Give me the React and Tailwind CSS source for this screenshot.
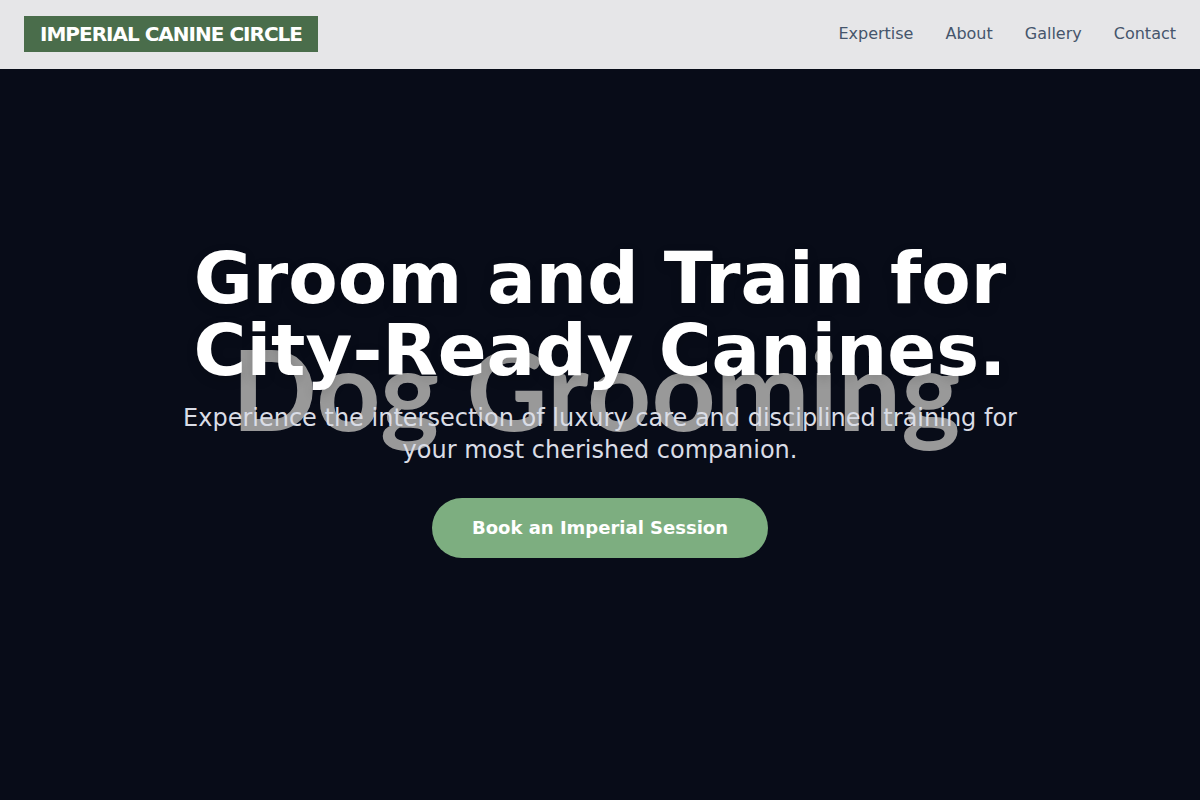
const navLinks = [
  { label: 'Expertise', href: '#expertise' },
  { label: 'About', href: '#about' },
  { label: 'Gallery', href: '#gallery' },
  { label: 'Contact', href: '#contact' },
];

function Navbar() {
  return (
    <header className="fixed inset-x-0 top-0 z-20 border-b border-[#e6e6e8] bg-[#e6e6e8]">
      <div className="flex items-center justify-between px-6 py-4">
        <a href="#home" className="bg-[#4a6d4b] px-4 py-1 text-xl font-bold tracking-tighter text-white">
          IMPERIAL CANINE CIRCLE
        </a>
        <nav className="flex items-center gap-8">
          {navLinks.map((link) => (
            <a key={link.href} href={link.href} className="text-base text-slate-600 hover:text-slate-900">
              {link.label}
            </a>
          ))}
        </nav>
      </div>
    </header>
  );
}

function Hero() {
  return (
    <section id="home" className="relative flex min-h-screen items-center justify-center overflow-hidden bg-[#080c18]">
      {/* backdrop word behind the hero copy */}
      <div className="pointer-events-none absolute inset-0 flex items-center justify-center pr-2 pb-6 whitespace-nowrap font-['Lato',sans-serif] text-[112px] leading-none font-bold text-[#999999]">
        Dog Grooming
      </div>
      <div className="relative z-10 max-w-4xl px-6 text-center">
        <h1 className="mb-4 text-7xl leading-none font-bold text-white [text-shadow:0_4px_12px_rgba(0,0,0,0.15)]">
          Groom and Train for City-Ready Canines.
        </h1>
        <p className="mb-8 text-2xl text-[#dadde6]">
          Experience the intersection of luxury care and disciplined training for your most cherished companion.
        </p>
        <button type="button" className="rounded-full bg-[#7dae80] px-10 py-4 text-lg font-bold text-white hover:bg-[#6b9c6e]">
          Book an Imperial Session
        </button>
      </div>
    </section>
  );
}

export default function App() {
  return (
    <div className="min-h-screen font-['DejaVu_Sans',sans-serif]">
      <Navbar />
      <main>
        <Hero />
      </main>
    </div>
  );
}
